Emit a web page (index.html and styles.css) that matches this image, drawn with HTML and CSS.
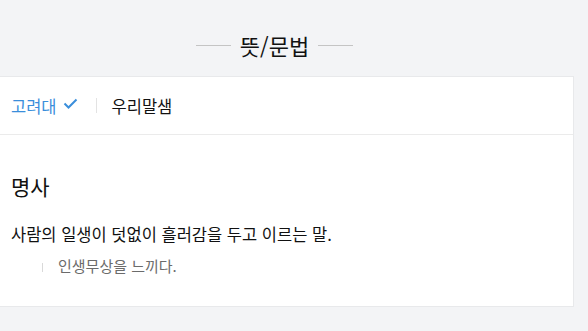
FILE: index.html
```html
<!DOCTYPE html>
<html lang="ko">
<head>
    <meta charset="UTF-8">
    <meta name="viewport" content="width=device-width, initial-scale=1.0">
    <title>뜻/문법</title>
    <link rel="stylesheet" href="styles.css">
</head>
<body>
    <div class="page">
        <!-- 섹션 제목 -->
        <h2 class="section-title">
            <span class="title-line"></span>
            <span class="title-text">뜻/문법</span>
            <span class="title-line"></span>
        </h2>

        <!-- 사전 카드 -->
        <div class="card">
            <div class="tabs">
                <a class="tab active" href="#">고려대
                    <svg class="check" width="15" height="11" viewBox="0 0 15 11">
                        <polyline points="1.5,5.5 5.5,9.5 13.5,1.5" fill="none" stroke="currentColor" stroke-width="2"/>
                    </svg>
                </a>
                <span class="tab-divider"></span>
                <a class="tab" href="#">우리말샘</a>
            </div>

            <div class="meaning">
                <h3 class="pos">명사</h3>
                <p class="definition">사람의 일생이 덧없이 흘러감을 두고 이르는 말.</p>
                <p class="example">인생무상을 느끼다.</p>
            </div>
        </div>
    </div>
</body>
</html>
```

FILE: styles.css
```css
/* 기본 */
body {
    margin: 0;
    padding: 0;
    background-color: #f3f4f6;
    font-family: "Noto Sans CJK KR", "Noto Sans", sans-serif;
    color: #111;
    overflow: hidden;
}

.page {
    width: 599px;
    margin-left: -25px;
}

/* 섹션 제목 */
.section-title {
    display: flex;
    justify-content: center;
    align-items: center;
    gap: 9px;
    margin: 0;
    padding-top: 31px;
    margin-bottom: 17px;
    font-size: 22px;
    line-height: 28px;
    font-weight: 400;
}

.title-line {
    width: 35px;
    height: 1px;
    background: #c4c4c4;
}

/* 카드 */
.card {
    background: #fff;
    border: 1px solid #e8e9eb;
}

.tabs {
    display: flex;
    align-items: center;
    height: 57px;
    padding: 0 35px;
    border-bottom: 1px solid #ebebeb;
}

.tab {
    display: flex;
    align-items: center;
    font-size: 16.5px;
    color: #111;
    text-decoration: none;
}

.tab.active {
    color: #3a8edb;
}

.check {
    margin-left: 6px;
    margin-top: -4px;
}

.tab-divider {
    width: 1px;
    height: 15px;
    background: #e3e3e3;
    margin: 0 15px 0 18px;
}

/* 뜻 */
.meaning {
    padding: 37px 35px 30px;
}

.pos {
    margin: 0 0 22px;
    font-size: 21px;
    line-height: 28px;
    font-weight: 400;
}

.definition {
    margin: 0 0 10px;
    font-size: 16.5px;
    line-height: 24px;
}

.example {
    margin: 0 0 0 31px;
    padding-left: 16px;
    font-size: 15px;
    line-height: 20px;
    color: #6b6b6b;
    position: relative;
}

.example:before {
    content: '';
    position: absolute;
    left: 0;
    top: 7px;
    width: 1px;
    height: 9px;
    background: #d9d9d9;
}
```
